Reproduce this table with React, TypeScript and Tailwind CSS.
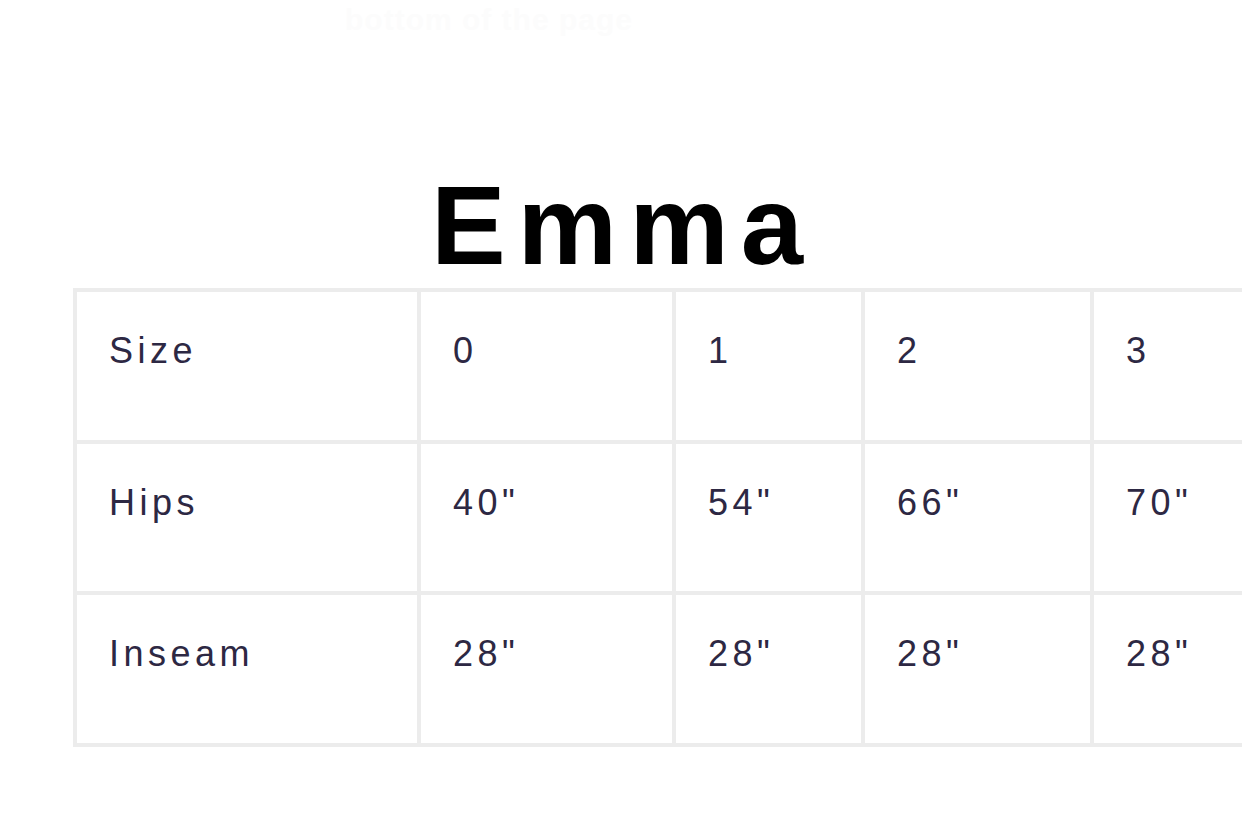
export default function App() {
  const rows = [
    ["Size", "0", "1", "2", "3"],
    ["Hips", '40"', '54"', '66"', '70"'],
    ["Inseam", '28"', '28"', '28"', '28"'],
  ];
  return (
    <div
      className="w-[1242px] h-[828px] overflow-hidden bg-white"
      style={{ fontFamily: '"Liberation Sans", Arial, sans-serif' }}
    >
      <div className="h-[40px] flex items-start pl-[345px] pt-[4px] text-[30px] font-bold leading-[32px] text-[#fcfcfc] tracking-[1px]">
        bottom of the page
      </div>
      <div className="mt-[130px] text-center text-[112px] leading-[112px] font-bold text-black tracking-[12px] pl-[4px]">
        Emma
      </div>
      <div className="mt-[6px] ml-[73px] w-[1300px]">
        <div className="grid grid-cols-[340px_251px_185px_225px_250px] grid-rows-[148px_147px_148px] gap-[4px] p-[4px] bg-[#ececec] w-max">
          {rows.flatMap((r, ri) =>
            r.map((c, ci) => (
              <div
                key={ri + "-" + ci}
                className="bg-white pl-[32px] pt-[39px] text-[36px] leading-[40px] tracking-[4.5px] text-[#2d2843]"
              >
                {c}
              </div>
            ))
          )}
        </div>
      </div>
    </div>
  );
}
